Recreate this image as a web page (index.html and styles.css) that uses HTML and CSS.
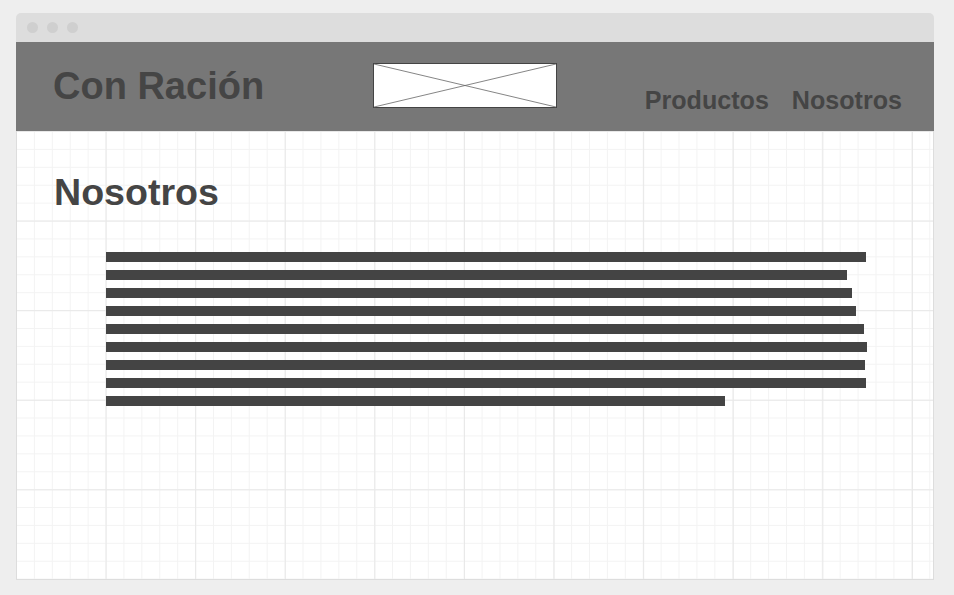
FILE: index.html
```html
<!DOCTYPE html>
<html lang="es">
<head>
<meta charset="utf-8">
<title>Con Ración - Nosotros</title>
<link rel="stylesheet" href="styles.css">
</head>
<body>
<div class="window">
  <div class="titlebar">
    <span class="dot"></span><span class="dot"></span><span class="dot"></span>
  </div>
  <header class="header">
    <div class="brand">Con Ración</div>
    <div class="logo">
      <svg width="184" height="45" viewBox="0 0 184 45" xmlns="http://www.w3.org/2000/svg">
        <rect x="0.5" y="0.5" width="183" height="44" fill="#ffffff" stroke="#444444" stroke-width="1"/>
        <line x1="1" y1="1" x2="183" y2="44" stroke="#666666" stroke-width="0.8"/>
        <line x1="1" y1="44" x2="183" y2="1" stroke="#666666" stroke-width="0.8"/>
      </svg>
    </div>
    <nav class="nav">
      <a class="nav-link">Productos</a>
      <a class="nav-link">Nosotros</a>
    </nav>
  </header>
  <main class="content">
    <h1 class="heading">Nosotros</h1>
    <div class="text-block">
      <div class="bar" style="width:760px"></div>
      <div class="bar" style="width:741px"></div>
      <div class="bar" style="width:746px"></div>
      <div class="bar" style="width:750px"></div>
      <div class="bar" style="width:758px"></div>
      <div class="bar" style="width:761px"></div>
      <div class="bar" style="width:759px"></div>
      <div class="bar" style="width:760px"></div>
      <div class="bar" style="width:619px"></div>
    </div>
  </main>
</div>
</body>
</html>
```

FILE: styles.css
```css
html, body {
  margin: 0;
  padding: 0;
}
body {
  background: #eeeeee;
  font-family: "Liberation Sans", Arial, sans-serif;
}
.window {
  width: 918px;
  margin: 13px 0 0 16px;
}
.titlebar {
  height: 29px;
  background: #dddddd;
  border-radius: 5px 5px 0 0;
  display: flex;
  align-items: center;
  gap: 9px;
  padding-left: 11px;
  box-sizing: border-box;
}
.dot {
  width: 11px;
  height: 11px;
  border-radius: 50%;
  background: #cfcfcf;
}
.header {
  height: 89px;
  background: #777777;
  display: grid;
  grid-template-columns: 320px 184px 1fr;
  align-items: start;
  padding: 0 32px 0 37px;
  box-sizing: border-box;
  color: #454545;
}
.brand {
  font-size: 38px;
  line-height: 38px;
  font-weight: bold;
  margin-top: 25px;
  white-space: nowrap;
}
.logo {
  margin-top: 21px;
  height: 45px;
}
.logo svg {
  display: block;
}
.nav {
  display: flex;
  justify-content: flex-end;
  gap: 23px;
  margin-top: 46px;
}
.nav-link {
  font-size: 25.1px;
  line-height: 25px;
  font-weight: bold;
  color: #454545;
  white-space: nowrap;
}
.content {
  height: 449px;
  box-sizing: border-box;
  border: 1px solid #dddddd;
  border-top: none;
  background-color: #ffffff;
  background-image:
    linear-gradient(to right, #e8e8e8 1px, transparent 1px),
    linear-gradient(to bottom, #e8e8e8 1px, transparent 1px),
    linear-gradient(to right, #f3f3f3 1px, transparent 1px),
    linear-gradient(to bottom, #f3f3f3 1px, transparent 1px);
  background-size: 89.6px 100%, 100% 89.6px, 17.92px 100%, 100% 17.92px;
  background-position: -1px 0, 0 0, -1px 0, 0 0;
  padding: 42px 0 0 37px;
}
.heading {
  margin: 0;
  font-size: 37.6px;
  line-height: 38px;
  font-weight: bold;
  color: #454545;
}
.text-block {
  margin: 41px 0 0 52px;
  display: flex;
  flex-direction: column;
  gap: 8px;
}
.bar {
  height: 10px;
  background: #444444;
}
```
